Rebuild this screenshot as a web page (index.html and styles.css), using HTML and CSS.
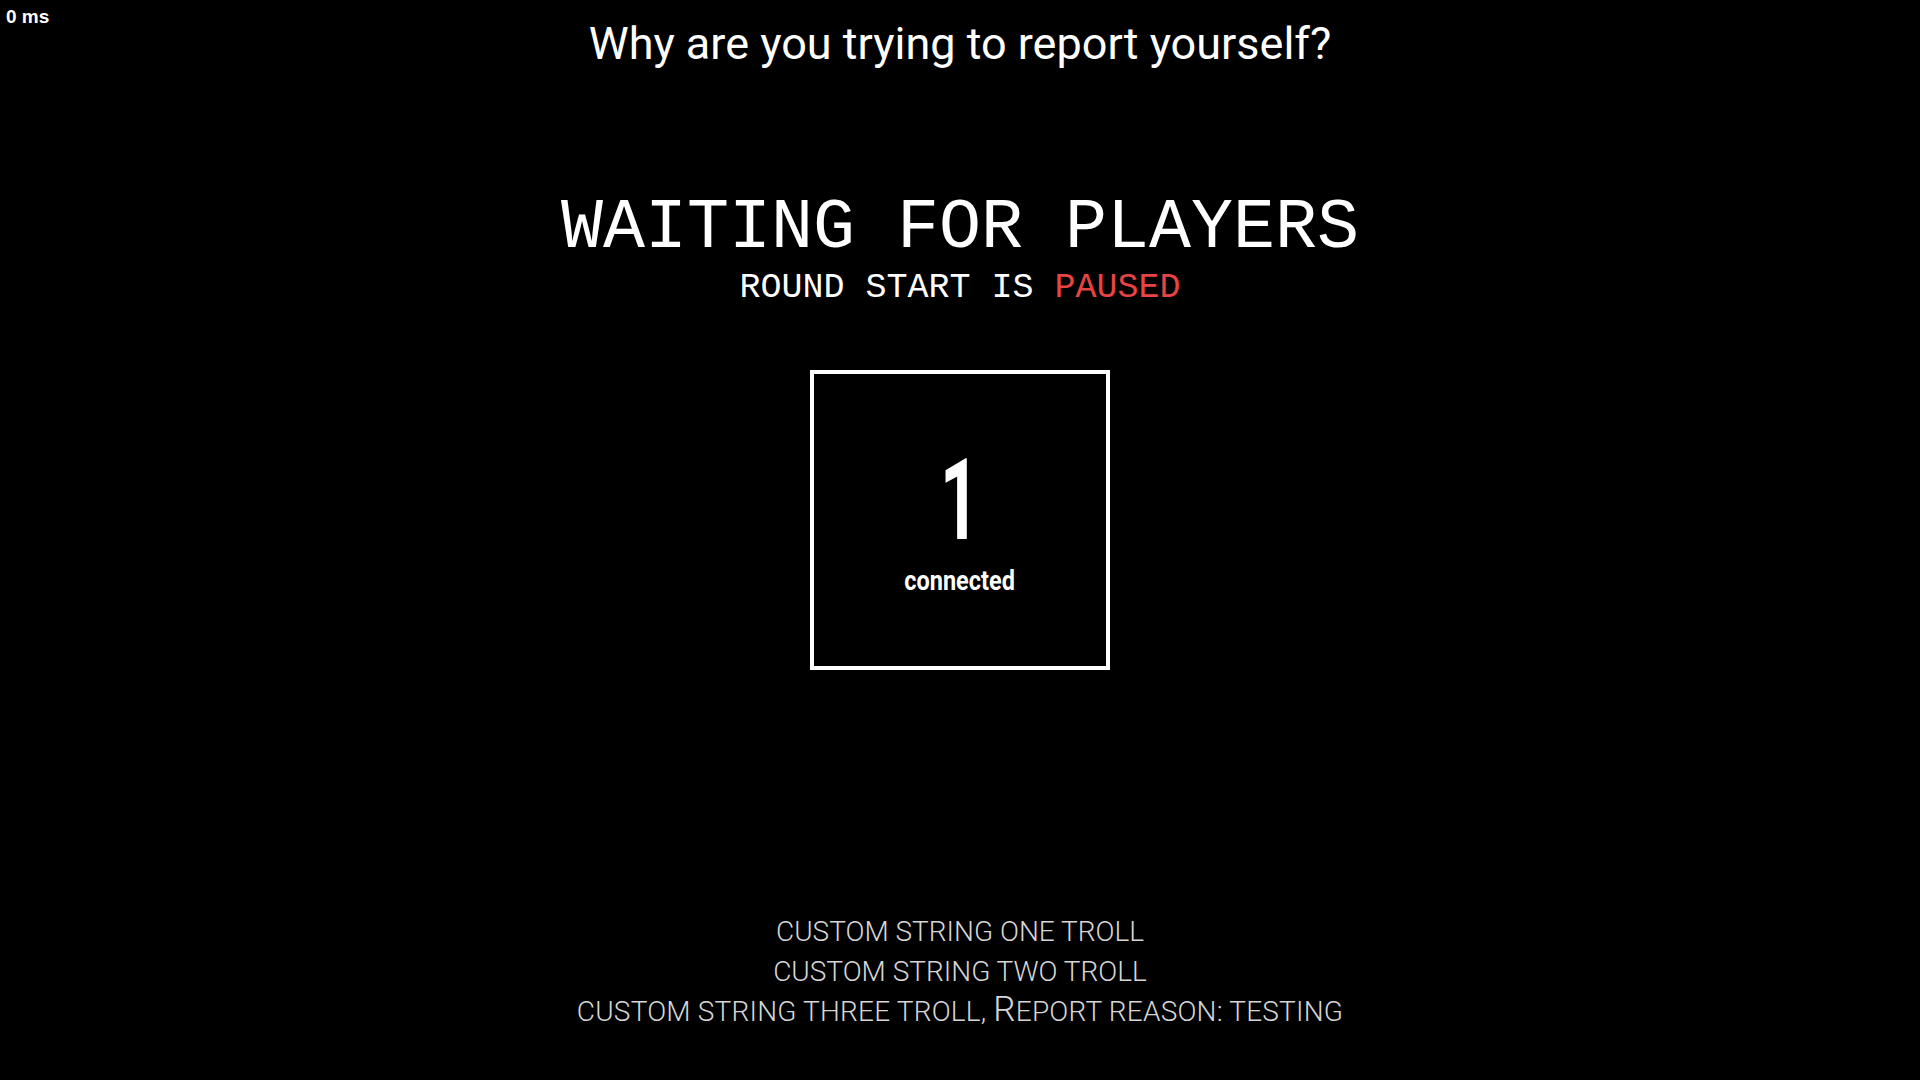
FILE: index.html
```html
<!DOCTYPE html>
<html lang="en">
<head>
<meta charset="utf-8">
<title>Waiting for players</title>
<link rel="stylesheet" href="styles.css">
</head>
<body>
<div class="ping">0 ms</div>
<div class="screen">
  <main class="main">
    <h1 class="title">Why are you trying to report yourself?</h1>
    <h2 class="waiting">WAITING FOR PLAYERS</h2>
    <p class="status">ROUND START IS <span class="paused">PAUSED</span></p>
    <div class="counter">
      <div class="count"><span class="count-num">1</span></div>
      <div class="count-label"><span class="count-text">connected</span></div>
    </div>
  </main>
  <footer class="footer">
    <p class="line">CUSTOM STRING ONE TROLL</p>
    <p class="line">CUSTOM STRING TWO TROLL</p>
    <p class="line line-wide">CUSTOM STRING THREE TROLL, <span class="cap">R</span>EPORT REASON: TESTING</p>
  </footer>
</div>
</body>
</html>
```

FILE: styles.css
```css
html, body {
  margin: 0;
  padding: 0;
  background: #000;
  color: #fff;
}

body {
  font-family: "Roboto", "Liberation Sans", sans-serif;
  overflow: hidden;
}

.ping {
  position: absolute;
  left: 6px;
  top: 7px;
  font-family: "Liberation Sans", Arial, sans-serif;
  font-weight: 700;
  font-size: 19px;
  line-height: 19px;
  color: #fff;
}

.screen {
  height: 100vh;
  display: flex;
  flex-direction: column;
  align-items: center;
}

.main {
  display: flex;
  flex-direction: column;
  align-items: center;
  padding-top: 21px;
}

.title {
  margin: 0;
  font-family: "Roboto", sans-serif;
  font-weight: 400;
  font-size: 45px;
  line-height: 45px;
  color: #fff;
}

.waiting {
  margin: 128px 0 0;
  font-family: "Liberation Mono", "DejaVu Sans Mono", monospace;
  font-weight: 400;
  font-size: 70px;
  line-height: 70px;
  color: #fff;
  white-space: pre;
}

.status {
  margin: 7px 0 0;
  font-family: "Liberation Mono", "DejaVu Sans Mono", monospace;
  font-size: 35px;
  line-height: 35px;
  color: #fff;
  white-space: pre;
}

.paused {
  color: #e84444;
}

.counter {
  margin-top: 64px;
  width: 300px;
  height: 300px;
  box-sizing: border-box;
  border: 4px solid #fff;
  display: flex;
  flex-direction: column;
  align-items: center;
  padding-top: 69px;
}

.count {
  font-family: "Roboto", sans-serif;
  font-weight: 700;
  font-size: 114px;
  line-height: 114px;
}

.count-num {
  display: inline-block;
  transform: scaleX(0.6);
}

.count-label {
  margin-top: 11px;
  font-family: "Roboto", sans-serif;
  font-weight: 700;
  font-size: 27px;
  line-height: 27px;
}

.count-text {
  display: inline-block;
  transform: scaleX(0.87);
}

.footer {
  margin-top: auto;
  padding-bottom: 48px;
  display: flex;
  flex-direction: column;
  align-items: center;
}

.line {
  margin: 0;
  font-family: "Roboto", sans-serif;
  font-weight: 300;
  font-size: 28px;
  line-height: 40px;
  color: #d6d6d6;
  white-space: pre;
}

.line-wide {
  letter-spacing: 0.2px;
}

.cap {
  font-size: 35px;
  line-height: 1;
}
```
